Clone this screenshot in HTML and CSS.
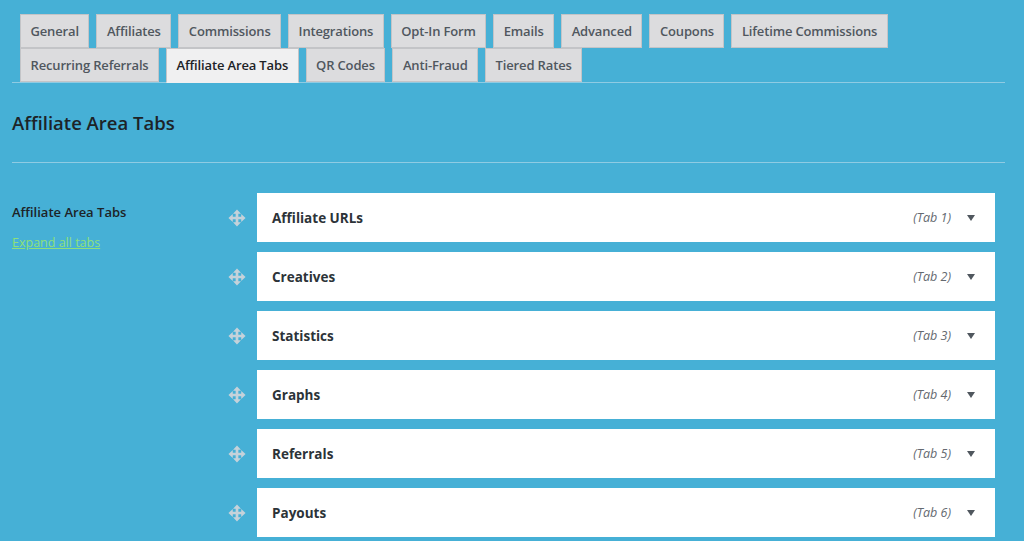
FILE: index.html
```html
<!DOCTYPE html>
<html>
<head>
<meta charset="utf-8">
<link rel="stylesheet" href="styles.css">
</head>
<body>
<div class="wrap">
  <nav class="tabs">
    <span class="tab">General</span>
    <span class="tab">Affiliates</span>
    <span class="tab">Commissions</span>
    <span class="tab">Integrations</span>
    <span class="tab">Opt-In Form</span>
    <span class="tab">Emails</span>
    <span class="tab">Advanced</span>
    <span class="tab">Coupons</span>
    <span class="tab">Lifetime Commissions</span>
    <span class="tab">Recurring Referrals</span>
    <span class="tab active">Affiliate Area Tabs</span>
    <span class="tab">QR Codes</span>
    <span class="tab">Anti-Fraud</span>
    <span class="tab">Tiered Rates</span>
  </nav>
  <h2 class="title">Affiliate Area Tabs</h2>
  <hr class="rule">
  <div class="row">
    <div class="label">
      <div class="label-text">Affiliate Area Tabs</div>
      <a class="expand" href="#">Expand all tabs</a>
    </div>
    <div class="list">
      <div class="item"><span class="handle"><svg viewBox="0 0 20 20"><path d="M10 0.5 L14.4 5.3 H11.5 V8.5 H14.7 V5.6 L19.5 10 L14.7 14.4 V11.5 H11.5 V14.7 H14.4 L10 19.5 L5.6 14.7 H8.5 V11.5 H5.3 V14.4 L0.5 10 L5.3 5.6 V8.5 H8.5 V5.3 H5.6 Z"/></svg></span><div class="panel"><span class="name">Affiliate URLs</span><span class="num">(Tab 1)</span><span class="caret"></span></div></div>
      <div class="item"><span class="handle"><svg viewBox="0 0 20 20"><path d="M10 0.5 L14.4 5.3 H11.5 V8.5 H14.7 V5.6 L19.5 10 L14.7 14.4 V11.5 H11.5 V14.7 H14.4 L10 19.5 L5.6 14.7 H8.5 V11.5 H5.3 V14.4 L0.5 10 L5.3 5.6 V8.5 H8.5 V5.3 H5.6 Z"/></svg></span><div class="panel"><span class="name">Creatives</span><span class="num">(Tab 2)</span><span class="caret"></span></div></div>
      <div class="item"><span class="handle"><svg viewBox="0 0 20 20"><path d="M10 0.5 L14.4 5.3 H11.5 V8.5 H14.7 V5.6 L19.5 10 L14.7 14.4 V11.5 H11.5 V14.7 H14.4 L10 19.5 L5.6 14.7 H8.5 V11.5 H5.3 V14.4 L0.5 10 L5.3 5.6 V8.5 H8.5 V5.3 H5.6 Z"/></svg></span><div class="panel"><span class="name">Statistics</span><span class="num">(Tab 3)</span><span class="caret"></span></div></div>
      <div class="item"><span class="handle"><svg viewBox="0 0 20 20"><path d="M10 0.5 L14.4 5.3 H11.5 V8.5 H14.7 V5.6 L19.5 10 L14.7 14.4 V11.5 H11.5 V14.7 H14.4 L10 19.5 L5.6 14.7 H8.5 V11.5 H5.3 V14.4 L0.5 10 L5.3 5.6 V8.5 H8.5 V5.3 H5.6 Z"/></svg></span><div class="panel"><span class="name">Graphs</span><span class="num">(Tab 4)</span><span class="caret"></span></div></div>
      <div class="item"><span class="handle"><svg viewBox="0 0 20 20"><path d="M10 0.5 L14.4 5.3 H11.5 V8.5 H14.7 V5.6 L19.5 10 L14.7 14.4 V11.5 H11.5 V14.7 H14.4 L10 19.5 L5.6 14.7 H8.5 V11.5 H5.3 V14.4 L0.5 10 L5.3 5.6 V8.5 H8.5 V5.3 H5.6 Z"/></svg></span><div class="panel"><span class="name">Referrals</span><span class="num">(Tab 5)</span><span class="caret"></span></div></div>
      <div class="item"><span class="handle"><svg viewBox="0 0 20 20"><path d="M10 0.5 L14.4 5.3 H11.5 V8.5 H14.7 V5.6 L19.5 10 L14.7 14.4 V11.5 H11.5 V14.7 H14.4 L10 19.5 L5.6 14.7 H8.5 V11.5 H5.3 V14.4 L0.5 10 L5.3 5.6 V8.5 H8.5 V5.3 H5.6 Z"/></svg></span><div class="panel"><span class="name">Payouts</span><span class="num">(Tab 6)</span><span class="caret"></span></div></div>
    </div>
  </div>
</div>
</body>
</html>
```
FILE: styles.css
```css
html, body {
  margin: 0;
  padding: 0;
  background: #46b0d6;
  font-family: "Open Sans", "Noto Sans", sans-serif;
  color: #1d2327;
  overflow: hidden;
}
.wrap {
  padding: 14px 19px 0 12px;
}
.tabs {
  display: flex;
  flex-wrap: wrap;
  column-gap: 7px;
  padding-left: 8px;
  border-bottom: 1px solid #8fcbe3;
}
.tab {
  display: block;
  box-sizing: border-box;
  height: 34px;
  padding: 0 9.5px;
  line-height: 32px;
  font-size: 13px;
  letter-spacing: -0.15px;
  font-weight: 600;
  color: #50575e;
  background: #dcdcde;
  border: 1px solid #c3c4c7;
}
.tab.active {
  background: #f0f0f1;
  color: #1d2327;
  border-bottom-color: #f0f0f1;
  margin-bottom: -1px;
  height: 35px;
}
.title {
  margin: 22px 0 0 0;
  font-size: 18.5px;
  font-weight: 600;
  line-height: 36px;
}
.rule {
  margin: 21px 0 0 0;
  border: 0;
  height: 1px;
  background: #8fcbe3;
}
.row {
  display: flex;
  margin-top: 30px;
}
.label {
  width: 213px;
  padding-top: 9px;
}
.label-text {
  font-size: 13px;
  font-weight: 600;
  line-height: 20px;
}
.expand {
  display: inline-block;
  margin-top: 12px;
  font-size: 12.5px;
  color: #8ee07a;
  text-decoration: underline;
}
.list {
  flex: 1;
  margin-right: 10px;
}
.item {
  display: flex;
  align-items: center;
  margin-bottom: 10px;
}
.handle {
  width: 24px;
  margin-right: 8px;
  display: flex;
  justify-content: center;
}
.handle svg {
  width: 18px;
  height: 18px;
  fill: #c5d2da;
}
.panel {
  flex: 1;
  height: 49px;
  background: #fff;
  display: flex;
  align-items: center;
  padding: 0 20px 0 15px;
}
.name {
  flex: 1;
  font-size: 13.5px;
  font-weight: 700;
  color: #2c3338;
}
.num {
  font-size: 12.5px;
  font-style: italic;
  color: #646970;
  margin-right: 16px;
}
.caret {
  width: 0;
  height: 0;
  border-left: 4px solid transparent;
  border-right: 4px solid transparent;
  border-top: 6px solid #50575e;
}
```
